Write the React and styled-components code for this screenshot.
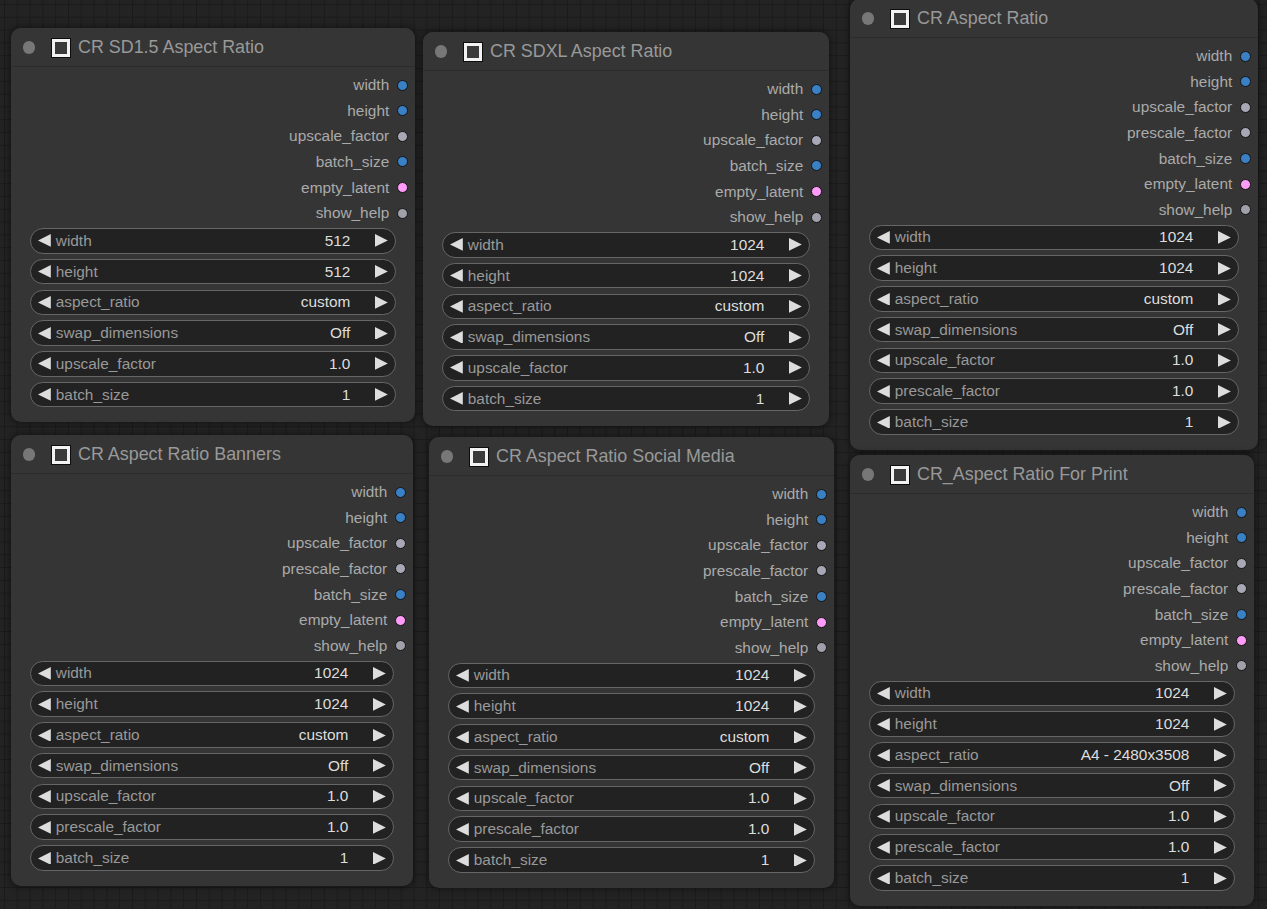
import React from "react";
import styled, { createGlobalStyle } from "styled-components";

const GlobalStyle = createGlobalStyle`
  html, body { margin: 0; padding: 0; }
  body {
    width: 1267px;
    height: 909px;
    overflow: hidden;
    font-family: "Liberation Sans", Arial, sans-serif;
    background-color: #232323;
  }
`;

const Canvas = styled.div`
  position: relative;
  width: 1267px;
  height: 909px;
  overflow: hidden;
  background-color: #232323;
  background-image:
    linear-gradient(to right, #1b1b1b 1px, transparent 1px),
    linear-gradient(to bottom, #1b1b1b 1px, transparent 1px);
  background-size: 12.8px 12.8px;
  background-position: 4px 4px;
`;

const Node = styled.div`
  position: absolute;
  box-sizing: border-box;
  display: flex;
  flex-direction: column;
  background: #353535;
  border-radius: 10px;
  box-shadow: 0 0 7px 1px rgba(0, 0, 0, 0.45);
  overflow: hidden;
`;

const Title = styled.div`
  display: flex;
  align-items: center;
  height: 39.4px;
  flex: 0 0 39.4px;
  padding-left: 11.6px;
  padding-top: 1px;
  background: #353535;
  border-bottom: 1px solid #2c2c2c;
  box-sizing: border-box;
`;

const TitleDot = styled.span`
  width: 12.8px;
  height: 12.8px;
  border-radius: 50%;
  background: #777;
  flex: 0 0 auto;
`;

const TitleBox = styled.span`
  margin-left: 16.6px;
  width: 12px;
  height: 12px;
  border: 3px solid #f2f2f2;
  background: #3a3a3a;
  box-shadow: 0 0 0 1px #0d0d0d;
  flex: 0 0 auto;
`;

const TitleText = styled.span`
  margin-left: 8px;
  font-size: 17.9px;
  color: #999;
  white-space: nowrap;
`;

const Outputs = styled.div`
  display: flex;
  flex-direction: column;
  padding-top: 5px;
`;

const OutputRow = styled.div`
  display: flex;
  align-items: center;
  justify-content: flex-end;
  height: 25.6px;
  gap: 7.4px;
  padding-right: 7.4px;
`;

const OutputLabel = styled.span`
  font-size: 15.4px;
  color: #aaa;
  white-space: nowrap;
`;

const SlotDot = styled.span`
  box-sizing: border-box;
  width: 11px;
  height: 11px;
  border-radius: 50%;
  background: ${(p) => p.$color};
  border: 1.3px solid #141414;
  flex: 0 0 auto;
`;

const Widgets = styled.div`
  display: flex;
  flex-direction: column;
  gap: 5.2px;
  padding: 2px 19.2px 15px;
`;

const Widget = styled.div`
  box-sizing: border-box;
  display: flex;
  align-items: center;
  height: 25.6px;
  border: 1px solid #666;
  border-radius: 13px;
  background: #222;
  padding: 0 6.7px;
`;

const Arrow = styled.svg`
  width: 12.8px;
  height: 12.8px;
  flex: 0 0 auto;
`;

const WLabel = styled.span`
  margin-left: 5.1px;
  flex: 1 1 auto;
  font-size: 15.4px;
  color: #999;
  white-space: nowrap;
`;

const WValue = styled.span`
  margin-right: 25px;
  font-size: 15.4px;
  color: #ddd;
  white-space: nowrap;
`;

const COLORS = {
  INT: "#3a80c4",
  FLOAT: "#a7a7b6",
  LATENT: "#ff9cf9",
  STRING: "#a0a0ab",
};

const outs6 = [
  ["width", "INT"],
  ["height", "INT"],
  ["upscale_factor", "FLOAT"],
  ["batch_size", "INT"],
  ["empty_latent", "LATENT"],
  ["show_help", "STRING"],
];

const outs7 = [
  ["width", "INT"],
  ["height", "INT"],
  ["upscale_factor", "FLOAT"],
  ["prescale_factor", "FLOAT"],
  ["batch_size", "INT"],
  ["empty_latent", "LATENT"],
  ["show_help", "STRING"],
];

const w6 = (size) => [
  ["width", size],
  ["height", size],
  ["aspect_ratio", "custom"],
  ["swap_dimensions", "Off"],
  ["upscale_factor", "1.0"],
  ["batch_size", "1"],
];

const w7 = (ratio) => [
  ["width", "1024"],
  ["height", "1024"],
  ["aspect_ratio", ratio],
  ["swap_dimensions", "Off"],
  ["upscale_factor", "1.0"],
  ["prescale_factor", "1.0"],
  ["batch_size", "1"],
];

const nodes = [
  { title: "CR SD1.5 Aspect Ratio", x: 11, y: 28, w: 404, outs: outs6, widgets: w6("512") },
  { title: "CR SDXL Aspect Ratio", x: 423, y: 32, w: 406, outs: outs6, widgets: w6("1024") },
  { title: "CR Aspect Ratio", x: 850, y: -1, w: 408, outs: outs7, widgets: w7("custom") },
  { title: "CR Aspect Ratio Banners", x: 11, y: 435, w: 402, outs: outs7, widgets: w7("custom") },
  { title: "CR Aspect Ratio Social Media", x: 429, y: 437, w: 405, outs: outs7, widgets: w7("custom") },
  { title: "CR_Aspect Ratio For Print", x: 850, y: 455, w: 404, outs: outs7, widgets: w7("A4 - 2480x3508") },
];

function GraphNode({ node }) {
  return (
    <Node style={{ left: node.x, top: node.y, width: node.w }}>
      <Title>
        <TitleDot />
        <TitleBox />
        <TitleText>{node.title}</TitleText>
      </Title>
      <Outputs>
        {node.outs.map(([name, type]) => (
          <OutputRow key={name}>
            <OutputLabel>{name}</OutputLabel>
            <SlotDot $color={COLORS[type]} />
          </OutputRow>
        ))}
      </Outputs>
      <Widgets>
        {node.widgets.map(([label, value]) => (
          <Widget key={label}>
            <Arrow viewBox="0 0 10 10">
              <polygon points="10,0 0,5 10,10" fill="#ddd" />
            </Arrow>
            <WLabel>{label}</WLabel>
            <WValue>{value}</WValue>
            <Arrow viewBox="0 0 10 10">
              <polygon points="0,0 10,5 0,10" fill="#ddd" />
            </Arrow>
          </Widget>
        ))}
      </Widgets>
    </Node>
  );
}

export default function App() {
  return (
    <>
      <GlobalStyle />
      <Canvas>
        {nodes.map((n) => (
          <GraphNode key={n.title} node={n} />
        ))}
      </Canvas>
    </>
  );
}
